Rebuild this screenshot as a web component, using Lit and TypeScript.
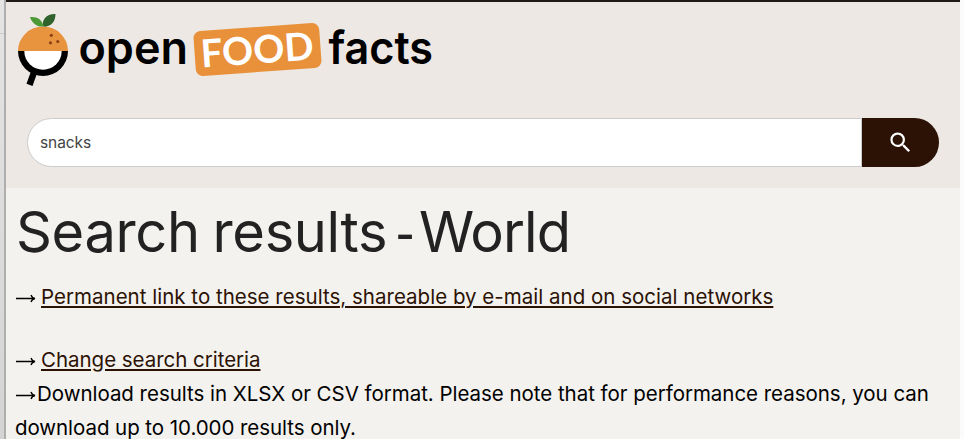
import { LitElement, html, css, svg } from "lit";
import { customElement } from "lit/decorators.js";

@customElement("off-logo")
class OffLogo extends LitElement {
  static styles = css`
    :host { display: block; width: 420px; height: 76px; }
    svg { display: block; }
    .word { font-family: Inter, sans-serif; font-weight: 600; }
    .badge { font-family: Lato, sans-serif; font-weight: 700; }
  `;
  render() {
    return html`<svg width="420" height="76" viewBox="16 12 420 76" role="img" aria-label="Open Food Facts">
      <path d="M34.5 71 29.5 84.8" stroke="#000" stroke-width="6.4" />
      <path d="M18 51a25 25 0 0 0 50 0z" fill="#000" />
      <path d="M24.3 51a18.7 18.7 0 0 0 37.4 0z" fill="#fff" />
      <path d="M18 51a25 24.5 0 0 1 50 0z" fill="#e8933d" />
      <path d="M42.5 26.5C37 27 32 23 30 17.2 37 16.5 42 19.5 43.8 26.5z" fill="#4c9a35" />
      <path d="M43.8 26.8C40.5 20 47 13.5 55.5 14 55.5 22 51 26.5 43.8 26.8z" fill="#2f632b" />
      <g fill="#8b4218"><circle cx="51.3" cy="35.3" r="1.6" /><circle cx="57.8" cy="41.5" r="1.6" /><circle cx="50.5" cy="42.8" r="1.6" /></g>
      <text class="word" x="78.5" y="63.5" font-size="45" textLength="109.5" lengthAdjust="spacingAndGlyphs">open</text>
      <g transform="rotate(-4.1 257.5 49.6)">
        <rect x="194.5" y="27" width="126" height="45" rx="7" fill="#e8913a" />
        <text class="badge" x="200.5" y="63.5" font-size="38.5" fill="#fff" textLength="113" lengthAdjust="spacingAndGlyphs">FOOD</text>
      </g>
      <text class="word" x="328.5" y="63.5" font-size="45" textLength="104.5" lengthAdjust="spacingAndGlyphs">facts</text>
    </svg>`;
  }
}

@customElement("app-root")
class AppRoot extends LitElement {
  static styles = css`
    :host {
      display: grid; grid-template-columns: 4px 2px 954px 4px; width: 964px; height: 439px;
      overflow: hidden; font-family: Inter, "Liberation Sans", sans-serif; color: #000;
    }
    .outside { background: linear-gradient(#e4e4e4, #d4d4d4); box-sizing: border-box; }
    .notch { height: 34px; border-bottom: 1px solid #ccc; box-sizing: border-box; }
    .rule { background: #aeaeae; }
    .gutter { background: #fbfbfb; }
    .page { background: #f4f2ee; overflow: hidden; }
    header { height: 188px; box-sizing: border-box; border-top: 2px solid #201a17; background: #eee8e4; padding: 10px 21px 0 10px; }
    form { display: flex; margin: 30px 0 0 11px; height: 49px; }
    .field {
      flex: 1; min-width: 0; box-sizing: border-box; border: 1px solid #ccc; border-radius: 25px 0 0 25px;
      background: #fff; padding: 0 12px; font: 15.5px Inter, sans-serif; color: #444; outline: none; letter-spacing: -0.1px;
    }
    .go { width: 77px; border: 0; padding: 0; border-radius: 0 25px 25px 0; background: #2c1205; display: grid; place-items: center; }
    main { padding: 0 9px; white-space: nowrap; }
    h1 { margin: 5px 0 0 1px; font-size: 56px; font-weight: 400; line-height: 78px; height: 78px; color: #222; letter-spacing: -0.36px; word-spacing: -2.5px; }
    .dash { font-family: "Liberation Sans", sans-serif; margin: 0 4.5px 0 8.5px; letter-spacing: 0; }
    .world { letter-spacing: -0.9px; }
    p { margin: 0; font-size: 20.5px; line-height: 34px; }
    .first { margin-top: 9px; }
    .change { margin-top: 29px; }
    .item { display: flex; align-items: center; }
    .arrow { width: 22px; height: 12px; flex: none; }
    .item a { margin-left: 4px; }
    .permalink { letter-spacing: 0.014px; }
    .criteria { letter-spacing: -0.03px; }
    .download { letter-spacing: -0.03px; }
    .limit { letter-spacing: -0.06px; }
    a { color: #2c1205; text-decoration: underline; text-decoration-thickness: 2px; text-underline-offset: 2px; }
  `;
  arrow() {
    return html`<svg class="arrow" viewBox="0 0 22 12" aria-hidden="true">${svg`<path d="M1 7.5H19.5M16 4C16.7 6 18 7.2 20 7.5 18 7.8 16.7 9 16 11" fill="none" stroke="#000" stroke-width="1.3" />`}</svg>`;
  }
  render() {
    return html`
      <div class="outside"><div class="notch"></div></div>
      <div class="rule"></div>
      <div class="page">
        <header>
          <off-logo></off-logo>
          <form>
            <input class="field" value="snacks" aria-label="Search" />
            <button class="go" type="button" aria-label="Search">
              <svg width="27" height="27" viewBox="0 0 24 24" fill="#fff"><path d="M15.5 14h-.79l-.28-.27A6.47 6.47 0 0 0 16 9.5 6.5 6.5 0 1 0 9.5 16c1.61 0 3.09-.59 4.23-1.57l.27.28v.79l5 4.99L20.49 19zm-6 0C7.01 14 5 11.99 5 9.5S7.01 5 9.5 5 14 7.01 14 9.5 11.99 14 9.5 14z" /></svg>
            </button>
          </form>
        </header>
        <main>
          <h1>Search results<span class="dash">-</span><span class="world">World</span></h1>
          <p class="item first">${this.arrow()}<a class="permalink">Permanent link to these results, shareable by e-mail and on social networks</a></p>
          <p class="item change">${this.arrow()}<a class="criteria">Change search criteria</a></p>
          <p class="item">${this.arrow()}<span class="download">Download results in XLSX or CSV format. Please note that for performance reasons, you can</span></p>
          <p class="limit">download up to 10.000 results only.</p>
        </main>
      </div>
      <div class="gutter"></div>
    `;
  }
}
